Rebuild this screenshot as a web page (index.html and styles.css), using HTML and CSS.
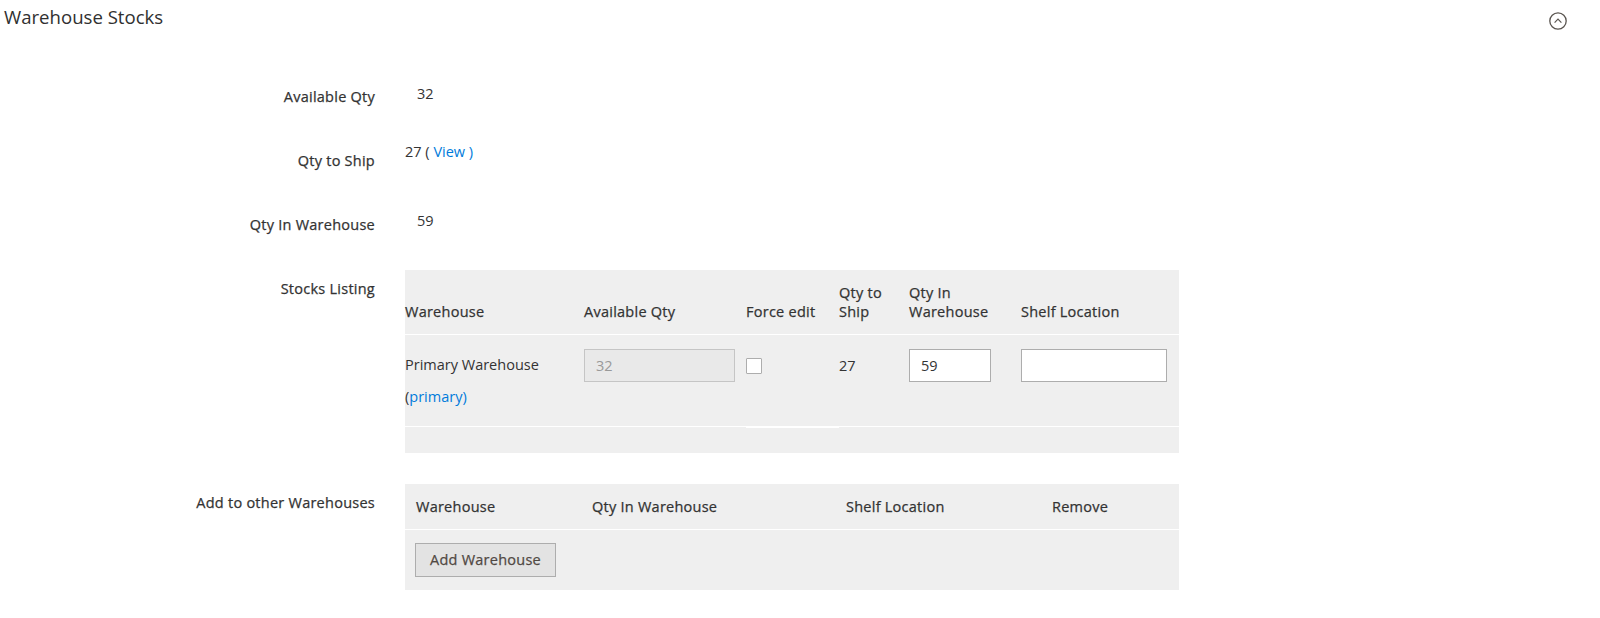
FILE: index.html
```html
<!DOCTYPE html>
<html lang="en">
<head>
    <meta charset="UTF-8">
    <meta name="viewport" content="width=device-width, initial-scale=1.0">
    <title>Warehouse Stocks</title>
    <link rel="stylesheet" href="styles.css">
</head>
<body>
    <div class="section">
        <!-- section header -->
        <div class="section-head">
            <h2 class="section-title">Warehouse Stocks</h2>
            <span class="section-toggle">
                <svg width="18" height="18" viewBox="0 0 18 18">
                    <circle cx="9" cy="9" r="8.2" fill="none" stroke="#5a5550" stroke-width="1.3"/>
                    <polyline points="5.6,10.6 9,7.2 12.4,10.6" fill="none" stroke="#5a5550" stroke-width="1.2"/>
                </svg>
            </span>
        </div>

        <div class="field field-short">
            <label class="field-label">Available Qty</label>
            <div class="field-value value-avail">32</div>
        </div>

        <div class="field field-short">
            <label class="field-label">Qty to Ship</label>
            <div class="field-value value-ship">27 ( <a href="#">View )</a></div>
        </div>

        <div class="field field-short">
            <label class="field-label">Qty In Warehouse</label>
            <div class="field-value value-wh">59</div>
        </div>

        <!-- stocks listing -->
        <div class="field field-table">
            <label class="field-label">Stocks Listing</label>
            <div class="field-value">
                <table class="stock-table">
                    <colgroup>
                        <col style="width: 179px">
                        <col style="width: 162px">
                        <col style="width: 93px">
                        <col style="width: 70px">
                        <col style="width: 112px">
                        <col style="width: 158px">
                    </colgroup>
                    <thead>
                        <tr>
                            <th>Warehouse</th>
                            <th>Available Qty</th>
                            <th>Force edit</th>
                            <th>Qty to<br>Ship</th>
                            <th>Qty In<br>Warehouse</th>
                            <th>Shelf Location</th>
                        </tr>
                    </thead>
                    <tbody>
                        <tr>
                            <td class="wh-name">Primary Warehouse<br>(<a href="#">primary)</a></td>
                            <td><input type="text" class="input input-avail" value="32" disabled></td>
                            <td><input type="checkbox" class="checkbox"></td>
                            <td class="cell-text">27</td>
                            <td><input type="text" class="input input-qty" value="59"></td>
                            <td><input type="text" class="input input-shelf"></td>
                        </tr>
                    </tbody>
                    <tfoot>
                        <tr>
                            <td></td>
                            <td></td>
                            <td class="foot-mark"></td>
                            <td></td>
                            <td></td>
                            <td></td>
                        </tr>
                    </tfoot>
                </table>
            </div>
        </div>

        <!-- add to other warehouses -->
        <div class="field field-table">
            <label class="field-label">Add to other Warehouses</label>
            <div class="field-value">
                <table class="add-table">
                    <colgroup>
                        <col style="width: 176px">
                        <col style="width: 254px">
                        <col style="width: 206px">
                        <col style="width: 138px">
                    </colgroup>
                    <thead>
                        <tr>
                            <th>Warehouse</th>
                            <th>Qty In Warehouse</th>
                            <th>Shelf Location</th>
                            <th>Remove</th>
                        </tr>
                    </thead>
                    <tbody>
                        <tr>
                            <td colspan="4"><button type="button" class="button">Add Warehouse</button></td>
                        </tr>
                    </tbody>
                </table>
            </div>
        </div>
    </div>
</body>
</html>
```

FILE: styles.css
```css
body {
    margin: 0;
    padding: 0;
    background-color: #fff;
    font-family: "Open Sans", "Liberation Sans", sans-serif;
    font-size: 14.5px;
    line-height: 19px;
    color: #333;
}

a {
    color: #007bdb;
    text-decoration: none;
}

.section-head {
    display: flex;
    justify-content: space-between;
    align-items: flex-start;
    height: 77.5px;
    box-sizing: border-box;
    padding: 5px 33px 0 4px;
}

.section-title {
    margin: 0;
    font-size: 18.6px;
    font-weight: 400;
    line-height: 24px;
    color: #303030;
}

.section-toggle {
    display: block;
    width: 18px;
    height: 18px;
    margin-top: 7px;
}

.section-toggle svg {
    display: block;
}

.field {
    display: grid;
    grid-template-columns: 375px 1fr;
    column-gap: 30px;
}

.field-short {
    min-height: 64px;
}

/* medium-weight look for labels and headings */
.field-label,
.stock-table th,
.add-table th,
.button {
    font-weight: 400;
    letter-spacing: 0.25px;
    -webkit-text-stroke: 0.25px currentColor;
}

.field-label {
    padding-top: 9.5px;
    text-align: right;
    color: #333;
}

.value-avail {
    padding: 6px 0 0 12px;
}

.value-ship {
    padding-top: 0;
}

.value-wh {
    padding: 5px 0 0 12px;
}

.field-table {
    margin-bottom: 31px;
}

/* tables */
.stock-table,
.add-table {
    width: 774px;
    table-layout: fixed;
    border-collapse: separate;
    border-spacing: 0;
    background-color: #efefef;
}

.stock-table th,
.add-table th {
    text-align: left;
    color: #333;
    border-bottom: 1px solid #fff;
}

.stock-table th {
    vertical-align: bottom;
    padding: 13px 0 13px 0;
}

.stock-table tbody td {
    vertical-align: top;
    padding: 14px 0 12px 0;
    border-bottom: 1px solid #fff;
}

.stock-table .wh-name {
    line-height: 32.5px;
}

.stock-table .cell-text {
    line-height: 33px;
}

.stock-table tfoot td {
    height: 26px;
    padding: 0;
}

.stock-table .foot-mark {
    box-shadow: inset 0 1px 0 #fff;
}

.add-table th {
    padding: 13px 11px;
}

.add-table td {
    padding: 13px 10px;
}

/* controls */
.input {
    display: block;
    box-sizing: border-box;
    height: 33px;
    margin: 0;
    padding: 0 11px;
    border: 1px solid #adadad;
    border-radius: 0;
    background-color: #fff;
    font-family: inherit;
    font-size: 14.5px;
    color: #333;
}

.input-avail {
    width: 151px;
    background-color: #e9e9e9;
    color: #999;
    border-color: #c5c5c5;
}

.input-qty {
    width: 82px;
}

.input-shelf {
    width: 146px;
}

.checkbox {
    appearance: none;
    -webkit-appearance: none;
    display: block;
    width: 16px;
    height: 16px;
    margin: 9px 0 0 0;
    border: 1px solid #adadad;
    border-radius: 1px;
    background-color: #fff;
}

.button {
    height: 34px;
    padding: 0 14px;
    border: 1px solid #adadad;
    border-radius: 0;
    background-color: #e3e3e3;
    font-family: inherit;
    font-size: 14.5px;
    color: #514943;
    cursor: pointer;
}

.button:hover {
    background-color: #dbdbdb;
}
```
